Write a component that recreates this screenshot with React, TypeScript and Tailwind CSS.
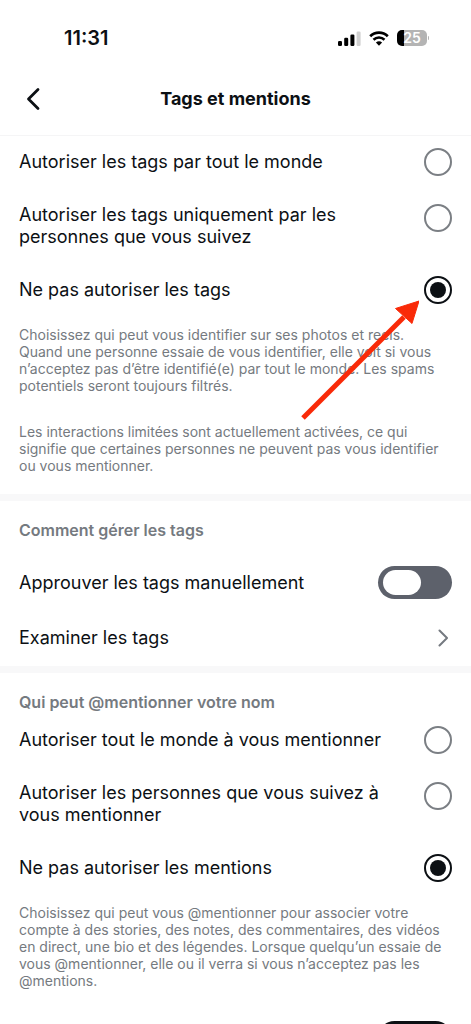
import { useState } from "react";
import type { ReactNode } from "react";

interface RadioOption {
    value: string;
    label: string;
}

interface RadioListProps {
    name: string;
    title: string;
    options: RadioOption[];
    value: string;
    onChange: (value: string) => void;
}

interface SwitchProps {
    checked: boolean;
    onChange: (checked: boolean) => void;
    ariaLabel?: string;
}

const TAG_OPTIONS: RadioOption[] = [
    { value: "everyone", label: "Autoriser les tags par tout le monde" },
    { value: "following", label: "Autoriser les tags uniquement par les personnes que vous suivez" },
    { value: "nobody", label: "Ne pas autoriser les tags" },
];

const MENTION_OPTIONS: RadioOption[] = [
    { value: "everyone", label: "Autoriser tout le monde à vous mentionner" },
    { value: "following", label: "Autoriser les personnes que vous suivez à vous mentionner" },
    { value: "nobody", label: "Ne pas autoriser les mentions" },
];

function StatusBar() {
    return (
        <div className="flex h-[76px] shrink-0 items-center justify-between pl-16 pr-[42px]">
            <span className="text-[20px] font-semibold leading-6">11:31</span>
            <div className="flex items-center gap-2">
                <svg width="23" height="15" viewBox="0 0 23 15" aria-hidden="true">
                    <rect x="0" y="10" width="4" height="5" rx="1.2" fill="#000" />
                    <rect x="6.2" y="6.8" width="4" height="8.2" rx="1.2" fill="#000" />
                    <rect x="12.4" y="3.6" width="4" height="11.4" rx="1.2" fill="#000" />
                    <rect x="18.6" y="0.5" width="4" height="14.5" rx="1.2" fill="#d0d0d0" />
                </svg>
                <svg width="20" height="15" viewBox="0 0 20 15" fill="none" aria-hidden="true">
                    <path d="M1.2 5.3a12.6 12.6 0 0 1 17.6 0" stroke="#000" strokeWidth="2.7" />
                    <path d="M4.5 8.7a7.9 7.9 0 0 1 11 0" stroke="#000" strokeWidth="2.6" />
                    <path d="M10 14.8 6.9 11.6a4.5 4.5 0 0 1 6.2 0Z" fill="#000" />
                </svg>
                <div className="flex items-center gap-px">
                    <div className="flex h-4 w-[30px] items-center justify-center rounded-[5px] bg-linear-to-r from-black from-25% to-[#b4b4b4] to-25% text-sm font-semibold leading-4 text-white">
                        25
                    </div>
                    <span className="h-1 w-px rounded-r bg-[#b4b4b4]" />
                </div>
            </div>
        </div>
    );
}

function RadioList({ name, title, options, value, onChange }: RadioListProps) {
    return (
        <fieldset aria-label={title} className="flex flex-col gap-7">
            {options.map((option) => (
                <label key={option.value} className="flex items-start justify-between">
                    <span className="flex min-h-7 max-w-[372px] items-center">{option.label}</span>
                    <input
                        type="radio"
                        name={name}
                        value={option.value}
                        checked={value === option.value}
                        onChange={() => onChange(option.value)}
                        className="grid size-7 shrink-0 appearance-none place-items-center rounded-full border-2 border-[#7b7f84] before:size-4 before:rounded-full checked:border-[#0c1014] checked:before:bg-[#0c1014]"
                    />
                </label>
            ))}
        </fieldset>
    );
}

function Switch({ checked, onChange, ariaLabel }: SwitchProps) {
    return (
        <input
            type="checkbox"
            role="switch"
            aria-label={ariaLabel}
            checked={checked}
            onChange={(e) => onChange(e.target.checked)}
            className="flex h-[33px] w-[74px] shrink-0 appearance-none items-center rounded-full bg-[#5d616b] px-[5px] before:h-[25px] before:w-[38px] before:rounded-full before:bg-white checked:justify-end checked:bg-[#0c1014]"
        />
    );
}

function SectionTitle({ children }: { children: ReactNode }) {
    return <h2 className="text-base font-semibold leading-[22px] text-[#757a80]">{children}</h2>;
}

function HelpText({ children }: { children: ReactNode }) {
    return <p className="pr-2 text-sm leading-[17px] text-[#757a80]">{children}</p>;
}

function Divider() {
    return <div className="h-[7px] shrink-0 bg-[#f8f8f9]" />;
}

// Red pointer drawn over the selected tag option
function Pointer() {
    return (
        <svg
            className="pointer-events-none absolute right-[52px] top-[164px]"
            width="118"
            height="121"
            viewBox="0 0 118 121"
            aria-hidden="true"
        >
            <path d="M2 118 103 17" stroke="#f92a08" strokeWidth="5" />
            <path d="M118 1 94.5 8.5 111 23.5Z" fill="#f92a08" stroke="#f92a08" />
        </svg>
    );
}

export default function App() {
    const [tags, setTags] = useState("nobody");
    const [mentions, setMentions] = useState("nobody");
    const [manual, setManual] = useState(false);
    const [showMentions, setShowMentions] = useState(true);

    return (
        <div className="flex h-screen flex-col bg-white font-[Inter,sans-serif] text-[18px] leading-[22px] text-[#0c1014]">
            <StatusBar />

            <header className="grid h-[60px] shrink-0 grid-cols-[1fr_auto_1fr] items-center border-b border-[#f5f5f6] px-[19px] pb-3.5">
                <button type="button" aria-label="Retour" className="flex w-7 justify-center">
                    <svg width="14" height="24" viewBox="0 0 14 24" fill="none" aria-hidden="true">
                        <path d="M12 2.5 2.5 12l9.5 9.5" stroke="currentColor" strokeWidth="2.8" strokeLinecap="round" strokeLinejoin="round" />
                    </svg>
                </button>
                <h1 className="font-bold">Tags et mentions</h1>
            </header>

            <main className="flex flex-1 flex-col overflow-y-auto [scrollbar-width:none]">
                <section className="relative px-[19px] pb-5 pt-3">
                    <RadioList name="tags" title="Qui peut vous identifier" options={TAG_OPTIONS} value={tags} onChange={setTags} />
                    <div className="mt-[22px] flex flex-col gap-[29px]">
                        <HelpText>
                            Choisissez qui peut vous identifier sur ses photos et reels. Quand une personne essaie de vous
                            identifier, elle voit si vous n’acceptez pas d’être identifié(e) par tout le monde. Les spams
                            potentiels seront toujours filtrés.
                        </HelpText>
                        <HelpText>
                            Les interactions limitées sont actuellement activées, ce qui signifie que certaines personnes
                            ne peuvent pas vous identifier ou vous mentionner.
                        </HelpText>
                    </div>
                    <Pointer />
                </section>

                <Divider />

                <section className="px-[19px] pb-3.5 pt-[18px]">
                    <SectionTitle>Comment gérer les tags</SectionTitle>
                    <label className="mt-[25px] flex items-center justify-between">
                        <span>Approuver les tags manuellement</span>
                        <Switch checked={manual} onChange={setManual} />
                    </label>
                    <a href="#review" className="mt-[25px] flex h-7 items-center justify-between">
                        <span>Examiner les tags</span>
                        <svg className="mr-1" width="11" height="18" viewBox="0 0 11 18" fill="none" aria-hidden="true">
                            <path d="m2.5 1.5 7.5 7.5-7.5 7.5" stroke="#757a80" strokeWidth="2" strokeLinecap="round" strokeLinejoin="round" />
                        </svg>
                    </a>
                </section>

                <Divider />

                <section className="px-[19px] pb-8 pt-[18px]">
                    <SectionTitle>Qui peut @mentionner votre nom</SectionTitle>
                    <div className="mt-[13px]">
                        <RadioList name="mentions" title="Qui peut vous mentionner" options={MENTION_OPTIONS} value={mentions} onChange={setMentions} />
                    </div>
                    <div className="mt-[22px]">
                        <HelpText>
                            Choisissez qui peut vous @mentionner pour associer votre compte à des stories, des notes, des
                            commentaires, des vidéos en direct, une bio et des légendes. Lorsque quelqu’un essaie de vous
                            @mentionner, elle ou il verra si vous n’acceptez pas les @mentions.
                        </HelpText>
                    </div>
                    <div className="mt-8 flex justify-end">
                        <Switch checked={showMentions} onChange={setShowMentions} ariaLabel="Afficher les mentions" />
                    </div>
                </section>
            </main>
        </div>
    );
}
